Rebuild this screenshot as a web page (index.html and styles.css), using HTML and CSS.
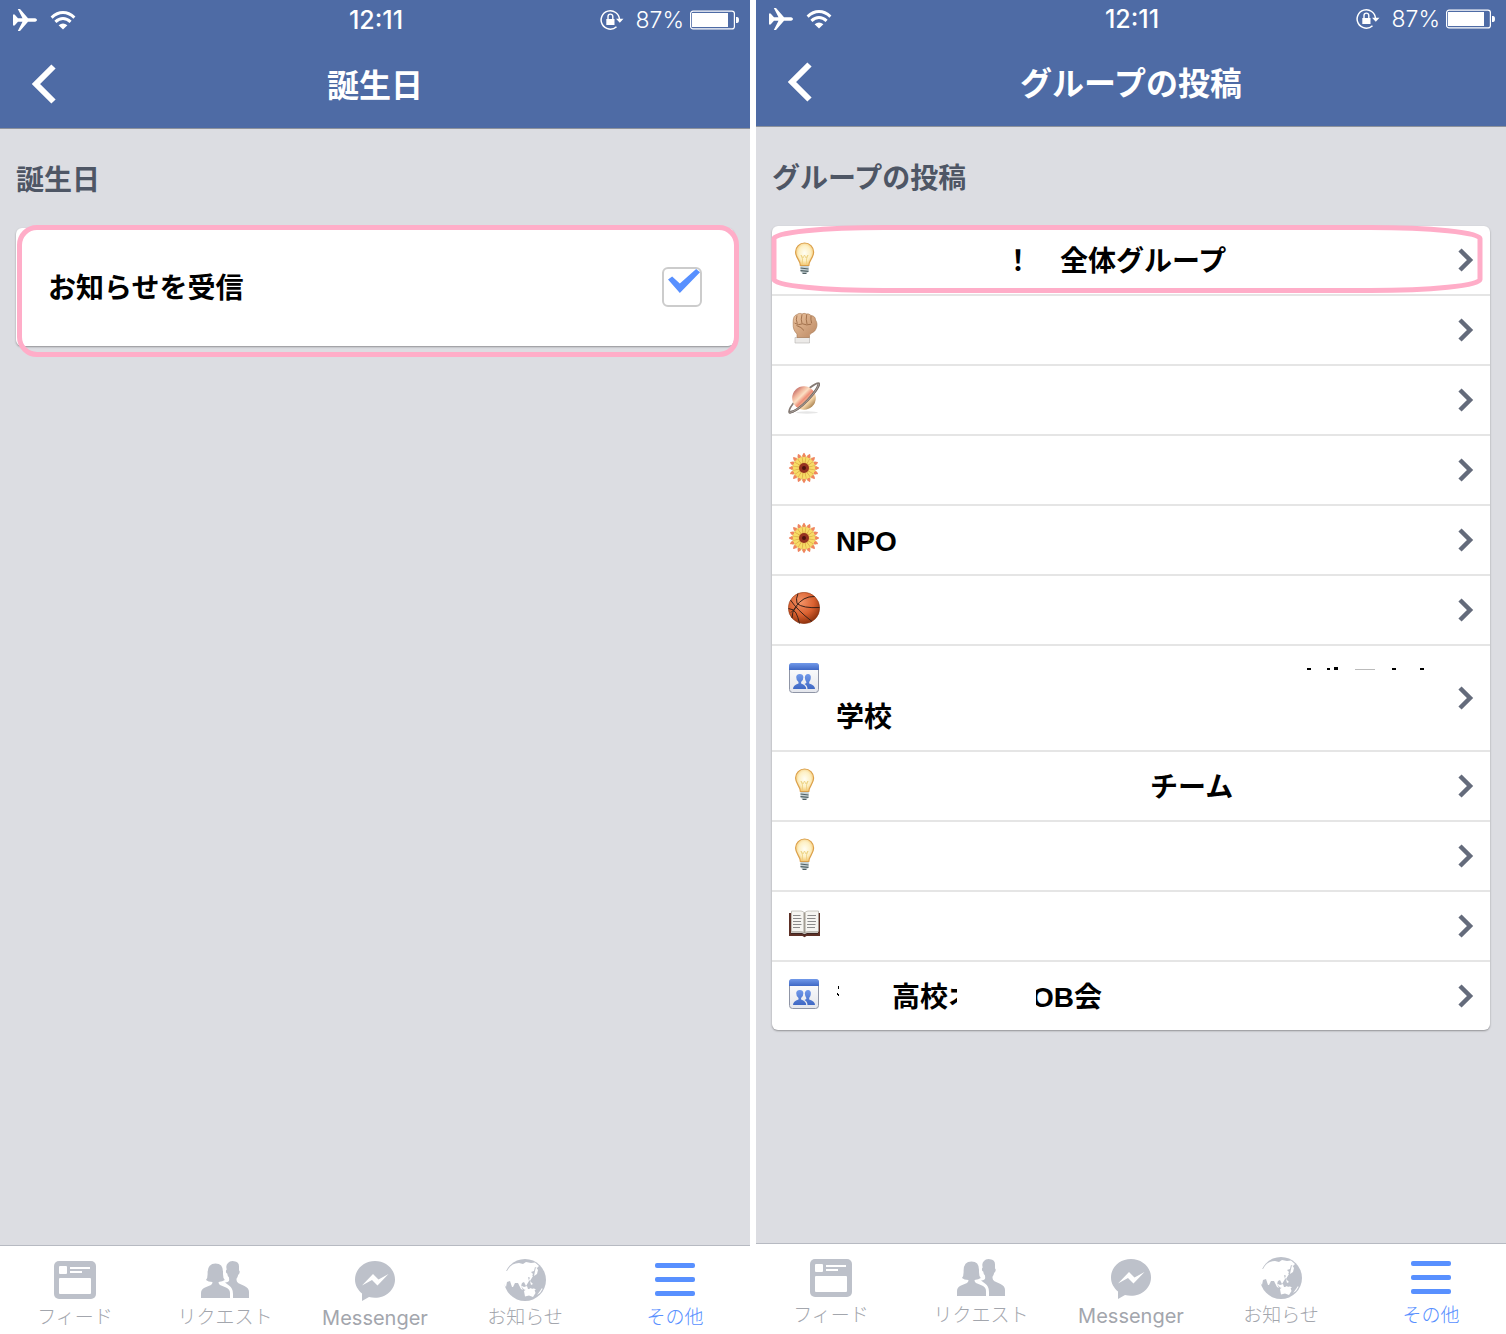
FILE: index.html
```html
<!DOCTYPE html>
<html lang="ja">
<head>
    <meta charset="UTF-8">
    <title>お知らせ設定</title>
    <link rel="stylesheet" href="styles.css">
</head>
<body>
    <!-- shared icons -->
    <svg class="sprite" aria-hidden="true">
        <defs>
            <radialGradient id="g-bulb" cx=".5" cy=".45" r=".55">
                <stop offset="0" stop-color="#fffef4"/>
                <stop offset=".6" stop-color="#fdf0c4"/>
                <stop offset="1" stop-color="#f5c672"/>
            </radialGradient>
            <linearGradient id="g-skin" x1="0" x2="1" y1="0" y2="1">
                <stop offset="0" stop-color="#ecc4a0"/>
                <stop offset="1" stop-color="#bb8862"/>
            </linearGradient>
            <linearGradient id="g-planet" x1="0" x2="1" y1="0" y2="1">
                <stop offset=".1" stop-color="#b9605f"/>
                <stop offset=".28" stop-color="#f0b39a"/>
                <stop offset=".4" stop-color="#fbe0c4"/>
                <stop offset=".52" stop-color="#ee8f78"/>
                <stop offset=".68" stop-color="#f6d6a8"/>
                <stop offset=".9" stop-color="#98703f"/>
            </linearGradient>
            <radialGradient id="g-ball" cx=".4" cy=".3" r=".7">
                <stop offset="0" stop-color="#f49468"/>
                <stop offset=".6" stop-color="#d9602f"/>
                <stop offset="1" stop-color="#92340f"/>
            </radialGradient>
            <linearGradient id="g-bar" x1="0" x2="0" y1="0" y2="1">
                <stop offset="0" stop-color="#7199ea"/>
                <stop offset="1" stop-color="#3f68c4"/>
            </linearGradient>
            <linearGradient id="g-pane" x1="0" x2="0" y1="0" y2="1">
                <stop offset="0" stop-color="#fff"/>
                <stop offset="1" stop-color="#e4e6ec"/>
            </linearGradient>
        </defs>

        <symbol id="plane" viewBox="0 0 26 22">
            <path fill="#fff" d="M1 5.500h1.600L6 9.300h4.500L5.800 0H8l8 9.300h7.200q1.800.4 1.800 1.700t-1.800 1.700H16L8 22H5.800l4.700-9.300H6L2.600 16.500H1L1 11z"/>
        </symbol>
        <symbol id="wifi" viewBox="0 0 26 19">
            <g fill="none" stroke="#fff" stroke-width="3">
                <path d="M1.600 6.600Q7 1.600 13 1.600t11.400 5"/>
                <path d="M5.400 10.800Q9 7.600 13 7.600t7.600 3.200"/>
            </g>
            <path fill="#fff" d="M8.600 14.200Q13 10.600 17.400 14.200L13 18.600z"/>
        </symbol>
        <symbol id="lock" viewBox="0 0 24 22">
            <path fill="none" stroke="#fff" stroke-width="1.500" d="M16.500 17.800A9.200 9.200 0 1 1 19.500 10.500"/>
            <path fill="#fff" d="M16 9.800h7.500l-3.700 4z"/>
            <path fill="#fff" d="M6.300 10h8.200v6H6.300z"/>
            <path fill="none" stroke="#fff" stroke-width="1.400" d="M8 10.500V7.500a2.400 2.400 0 0 1 4.800 0v3"/>
        </symbol>
        <symbol id="battery" viewBox="0 0 50 20">
            <rect x=".6" y="1.100" width="43.800" height="17.800" rx="2.500" fill="none" stroke="#fff" stroke-width="1.200"/>
            <rect x="2" y="3" width="36" height="14" fill="#fff"/>
            <path fill="#fff" d="M46 7h1q2 0 2 3t-2 3h-1z"/>
        </symbol>
        <symbol id="back" viewBox="0 0 26 40">
            <path fill="none" stroke="#fff" stroke-width="6" d="M22.500 2.500 5 20l17.500 17.500"/>
        </symbol>
        <symbol id="chevron" viewBox="0 0 16 24">
            <path fill="none" stroke="#646b7b" stroke-width="4.500" d="M2 2l10 10L2 22"/>
        </symbol>

        <symbol id="bulb" viewBox="0 0 32 32">
            <path fill="url(#g-bulb)" stroke="#dba04a" stroke-width="1.200" d="M12.400 23.500C12.400 18 7.600 16 7.600 10a9 9 0 0 1 18 0c0 6-4.800 8-4.800 13.500z"/>
            <path fill="none" stroke="#ecd07e" stroke-width=".8" d="M14.500 23v-6l-1.500-4 2 3 1.500-3 1.500 3 2-3-1.500 4v6"/>
            <path fill="#c8d3d6" d="M12.400 24h8.400v5q-1.500 3-4.200 3t-4.200-3z"/>
            <path fill="none" stroke="#4f6064" stroke-width="1.200" d="M12.500 26l8 1M12.500 28.700l8 .6M14.500 31.300h4"/>
        </symbol>
        <symbol id="fist" viewBox="0 0 32 32">
            <path fill="#eceae8" stroke="#b5b1ae" stroke-width=".6" d="M7 25.500h14.500V31H7z"/>
            <path fill="url(#g-skin)" stroke="#a5754f" stroke-width=".6" d="M9 25.500v-3.500C6 19 5 16 5.200 12 5 6 6 3.500 9 2.600 10 1.300 13 1 14 2q2-1.300 4.500 0 2.500-.7 4.500 1.500c3 .3 4.500 2 4.500 4.500 2.500 3.500 1.500 8-.8 11-2 2-5.200 2.500-5.200 4.500v2z"/>
            <path fill="none" stroke="#94633f" stroke-width=".8" d="M9 3.500Q7.500 8 9.300 11.500M14 2.500q-1.500 5 0 9M18.700 2.500q-1 5 .3 9.500M23 3.800q-.5 4 .7 7.500M6.500 11q4 3 8 .8 4 2 8.700.4M8.500 13.500q5 1.500 7.500 5"/>
        </symbol>
        <symbol id="planet" viewBox="0 0 32 32">
            <ellipse cx="19" cy="30.500" rx="11" ry="1.200" fill="#e6e6e6"/>
            <path fill="none" stroke="#857a74" stroke-width="1.800" d="M8 18C2 25 .5 29 1.300 30.500c2 2 12-6 19-13S32.500 3 31 1.300C29.500.5 25.500 3 21.500 6"/>
            <circle cx="16" cy="16" r="11.800" fill="url(#g-planet)"/>
            <path fill="none" stroke="#756b66" stroke-width="2.400" d="M1.800 30.300c5-.5 12-6 18-12.300S30 6 30.800 1.800"/>
            <path fill="none" stroke="#c0b8b2" stroke-width=".7" d="M1.800 30.300c5-.5 12-6 18-12.300S30 6 30.800 1.800"/>
        </symbol>
        <symbol id="petals" viewBox="0 0 32 32">
            <path fill="#f7dc66" stroke="#d1973c" stroke-width=".4" d="M16 14L13.800 6.500 14.600 3h2.800L18.200 6.500z"/>
            <path fill="#f08460" d="M14.400 4.500Q14.800 1 16 .8q1.200.2 1.600 3.700L16 5.200z"/>
        </symbol>
        <symbol id="flower" viewBox="0 0 32 32">
            <circle cx="16" cy="16" r="10" fill="#d9a23c"/>
            <use href="#petals"/>
            <use href="#petals" transform="rotate(22.500 16 16)"/>
            <use href="#petals" transform="rotate(45 16 16)"/>
            <use href="#petals" transform="rotate(67.500 16 16)"/>
            <use href="#petals" transform="rotate(90 16 16)"/>
            <use href="#petals" transform="rotate(112.500 16 16)"/>
            <use href="#petals" transform="rotate(135 16 16)"/>
            <use href="#petals" transform="rotate(157.500 16 16)"/>
            <use href="#petals" transform="rotate(180 16 16)"/>
            <use href="#petals" transform="rotate(202.500 16 16)"/>
            <use href="#petals" transform="rotate(225 16 16)"/>
            <use href="#petals" transform="rotate(247.500 16 16)"/>
            <use href="#petals" transform="rotate(270 16 16)"/>
            <use href="#petals" transform="rotate(292.500 16 16)"/>
            <use href="#petals" transform="rotate(315 16 16)"/>
            <use href="#petals" transform="rotate(337.500 16 16)"/>
            <circle cx="16" cy="16" r="5" fill="#963220"/>
            <circle cx="16" cy="16" r="2" fill="#4c130c"/>
        </symbol>
        <symbol id="ball" viewBox="0 0 32 32">
            <circle cx="16" cy="16" r="15.700" fill="url(#g-ball)" stroke="#84310f" stroke-width=".5"/>
            <path fill="none" stroke="#3b2219" stroke-width="1" d="M10 1.500Q7.500 7 9 11.500 15 16.500 31.500 15.500M26.500 4.500Q15 4 7.500 15 4 20 4 26M2.500 8Q9 18 24 29.500M.5 16.500Q6 17 8 21t3.500 10.500M3 20.500l6-6"/>
        </symbol>
        <symbol id="group" viewBox="0 0 32 32">
            <rect x="1.500" y="1.500" width="29" height="29" rx="3" fill="url(#g-pane)" stroke="#8f95a6"/>
            <path fill="url(#g-bar)" d="M1 8V4q0-3 3-3h24q3 0 3 3v4z"/>
            <path fill="url(#g-bar)" d="M5 27q0-4 5.500-5.500v-1.500Q8 17.500 8.200 15q.3-3 3.600-3t3.600 3q.2 2.500-2.300 5v1.500Q18.200 23 18.200 27zM19.500 27q0-3.500-3-5l1.800-1V20q-1.300-2-1.500-4.500.3-3.500 3.200-3.500 3.200.3 2.800 4 0 2-1.600 4v1.500Q27 23 27 27z"/>
        </symbol>
        <symbol id="book" viewBox="0 0 32 32">
            <path fill="#5d3026" d="M1 5h31v23H18.500l-2 1.300-2-1.300H1z"/>
            <path fill="#c9c6c0" d="M3 4l12 .8 1.500 1.300L18 4.800 30 4v22H3z"/>
            <path fill="#f6f5f1" stroke="#a8a49c" stroke-width=".6" d="M3.500 3h9.500q3 .5 3.500 2 .5-1.500 3.500-2h10.500v20.500h-10q-3 0-4 1.500-1-1.500-4-1.500h-9z"/>
            <path fill="#a39d92" d="M15.500 4.500h2V25h-2z"/>
            <path fill="none" stroke="#8b8b8b" d="M5 7.500h7.500M5 10.500h8.500M5 13.500h8M5 16.500h8.500M5 19.500h7M19.500 7.500H28M19 10.500h8.500M19.500 13.500H28M19 16.500h8.500M19 19.500h8"/>
            <path fill="none" stroke="#3d2420" d="M3 25.500h11.500l2 1.500 2-1.500H30"/>
        </symbol>

        <symbol id="feed" viewBox="0 0 44 44">
            <rect x="1" y="3" width="42" height="38" rx="5" fill="currentColor"/>
            <g fill="#fff">
                <rect x="6" y="8" width="8" height="8" rx="1"/>
                <rect x="17" y="9" width="20" height="2"/>
                <rect x="17" y="13" width="12" height="2"/>
                <rect x="6" y="20" width="32" height="16" rx="1"/>
            </g>
        </symbol>
        <symbol id="friends" viewBox="0 0 48 44">
            <path fill="currentColor" d="M0 40v-5q0-4 4-5.500l6-2.500q1.500-1 1.500-3Q7 24 5 22q1.800-2 1.600-7Q6.500 5.500 14.500 5.500T22 15q-.2 5 1.800 7-2 1.500-6.300 2 0 2 1.500 3l6 2.500q4 1.500 4 5.500v5z"/>
            <path fill="currentColor" d="M32 40v-4q0-6-4-8.500L24 24.500q4-.5 4.200-2.500l-.2-2.500q-1.500-1.200-1.800-4-1.500-.5-1.200-2.500 0-1.300.7-1.500Q24.500 7 27 5q2-2.400 6-1.800Q38.300 3.500 38 9v3.500q1 .3.600 2-.3 2-1.400 2.200-.5 2.500-1.700 4V22q0 2 2 3.200l6 2.800q4.500 2 4.500 6v6z"/>
        </symbol>
        <symbol id="messenger" viewBox="0 0 44 44">
            <path fill="currentColor" d="M22 3C11 3 2 11 2 21.500c0 6 3 10.500 7 14V43l7-4q3 .8 6 .8c11 0 20-8 20-18.300S33 3 22 3z"/>
            <path fill="#fff" d="M9 27.500L20 16l5.500 5.500L35.500 16 24.500 27.500 19 22z"/>
        </symbol>
        <symbol id="globe" viewBox="0 0 44 44">
            <circle cx="22" cy="22" r="21" fill="currentColor"/>
            <path fill="#fff" d="M4 13Q8 5 16 5l4 1 3-2 5 1 4-.5 4 3.500-2 2-2-1-1 4-3 1 2 2-2 4-3-1 1 4-3 5-2-4-2 1-1 3 2 4-2-1-3-6-3 0-2 4-1 0-2-6-3 1-1 5q-3-3-3-7 0-4 2-9z"/>
            <path fill="#fff" d="M33 9l2 3-1 4-3 2 1-5zM28 17l2 1-3 5-1-1zM17 27l4 2 3-1 1 3 6-.5 2 1-4 2-8-2zM27 23l3 3-2 1zM21 33q2-2 5-2l2-1 1.500 2 1.500-2 1.500 5-2.500 4-4-1.500-4 1zM37 33l2-3 .5 1-2.500 4-3 2z"/>
        </symbol>
        <symbol id="menu" viewBox="0 0 44 44">
            <g fill="currentColor">
                <rect x="2" y="5" width="40" height="5" rx="2"/>
                <rect x="2" y="19" width="40" height="5" rx="2"/>
                <rect x="2" y="33" width="40" height="5" rx="2"/>
            </g>
        </symbol>
    </svg>

    <section class="phone">
        <header class="header">
            <div class="status">
                <div class="status-left">
                    <svg width="26" height="22"><use href="#plane"/></svg>
                    <svg width="26" height="19"><use href="#wifi"/></svg>
                </div>
                <div class="clock">12:11</div>
                <div class="status-right">
                    <svg width="24" height="22"><use href="#lock"/></svg>
                    <span class="percent">87%</span>
                    <svg width="50" height="20"><use href="#battery"/></svg>
                </div>
            </div>
            <div class="nav">
                <button class="back" type="button" aria-label="戻る"><svg width="26" height="40"><use href="#back"/></svg></button>
                <h1>誕生日</h1>
            </div>
        </header>

        <main class="content">
            <h2>誕生日</h2>
            <div class="card">
                <div class="setting">
                    <label for="receive">お知らせを受信</label>
                    <input id="receive" type="checkbox" checked>
                </div>
                <div class="marker-card"></div>
            </div>
        </main>

        <nav class="tabs">
            <a href="#"><svg width="44" height="44"><use href="#feed"/></svg>フィード</a>
            <a href="#"><svg width="48" height="44"><use href="#friends"/></svg>リクエスト</a>
            <a href="#"><svg width="44" height="44"><use href="#messenger"/></svg><span class="latin">Messenger</span></a>
            <a href="#"><svg width="44" height="44"><use href="#globe"/></svg>お知らせ</a>
            <a href="#" class="active"><svg width="44" height="44"><use href="#menu"/></svg>その他</a>
        </nav>
    </section>

    <section class="phone phone-groups">
        <header class="header">
            <div class="status">
                <div class="status-left">
                    <svg width="26" height="22"><use href="#plane"/></svg>
                    <svg width="26" height="19"><use href="#wifi"/></svg>
                </div>
                <div class="clock">12:11</div>
                <div class="status-right">
                    <svg width="24" height="22"><use href="#lock"/></svg>
                    <span class="percent">87%</span>
                    <svg width="50" height="20"><use href="#battery"/></svg>
                </div>
            </div>
            <div class="nav">
                <button class="back" type="button" aria-label="戻る"><svg width="26" height="40"><use href="#back"/></svg></button>
                <h1>グループの投稿</h1>
            </div>
        </header>

        <main class="content">
            <h2>グループの投稿</h2>
            <div class="card">
                <a class="row" href="#">
                    <svg class="icon"><use href="#bulb"/></svg>
                    <span class="name"><span class="blank blank-m"></span>！　全体グループ</span>
                    <svg class="arrow"><use href="#chevron"/></svg>
                </a>
                <a class="row" href="#">
                    <svg class="icon"><use href="#fist"/></svg>
                    <span class="name"></span>
                    <svg class="arrow"><use href="#chevron"/></svg>
                </a>
                <a class="row" href="#">
                    <svg class="icon"><use href="#planet"/></svg>
                    <span class="name"></span>
                    <svg class="arrow"><use href="#chevron"/></svg>
                </a>
                <a class="row" href="#">
                    <svg class="icon"><use href="#flower"/></svg>
                    <span class="name"></span>
                    <svg class="arrow"><use href="#chevron"/></svg>
                </a>
                <a class="row" href="#">
                    <svg class="icon"><use href="#flower"/></svg>
                    <span class="name">NPO</span>
                    <svg class="arrow"><use href="#chevron"/></svg>
                </a>
                <a class="row" href="#">
                    <svg class="icon"><use href="#ball"/></svg>
                    <span class="name"></span>
                    <svg class="arrow"><use href="#chevron"/></svg>
                </a>
                <a class="row" href="#">
                    <svg class="icon"><use href="#group"/></svg>
                    <span class="name">
                        <!-- only the tops of the erased letters are left -->
                        <svg class="scraps" viewBox="0 0 124 36" aria-hidden="true">
                            <path d="M3 4h4v2H3zM23 4h3v2h-3zM30 3h4v3h-4zM88 4h4v2h-4zM116 4h4v2h-4z"/>
                            <path fill="#bbb" d="M51 5h20v1H51z"/>
                        </svg>
                        <span class="second-line">学校</span>
                    </span>
                    <svg class="arrow"><use href="#chevron"/></svg>
                </a>
                <a class="row" href="#">
                    <svg class="icon"><use href="#bulb"/></svg>
                    <span class="name"><span class="blank blank-l"></span>チーム</span>
                    <svg class="arrow"><use href="#chevron"/></svg>
                </a>
                <a class="row" href="#">
                    <svg class="icon"><use href="#bulb"/></svg>
                    <span class="name"></span>
                    <svg class="arrow"><use href="#chevron"/></svg>
                </a>
                <a class="row" href="#">
                    <svg class="icon"><use href="#book"/></svg>
                    <span class="name"></span>
                    <svg class="arrow"><use href="#chevron"/></svg>
                </a>
                <a class="row" href="#">
                    <svg class="icon"><use href="#group"/></svg>
                    <span class="name"><svg class="specks" viewBox="0 0 56 36" aria-hidden="true"><path d="M2 6h1v3H2zM1 13h1v2H1zM2 14h1v2H2z"/></svg>高校オ<span class="blank eraser"></span>OB会</span>
                    <svg class="arrow"><use href="#chevron"/></svg>
                </a>
                <svg class="marker-row" aria-hidden="true"><rect x="3" y="2.500" rx="110" ry="11"/></svg>
            </div>
        </main>

        <nav class="tabs">
            <a href="#"><svg width="44" height="44"><use href="#feed"/></svg>フィード</a>
            <a href="#"><svg width="48" height="44"><use href="#friends"/></svg>リクエスト</a>
            <a href="#"><svg width="44" height="44"><use href="#messenger"/></svg><span class="latin">Messenger</span></a>
            <a href="#"><svg width="44" height="44"><use href="#globe"/></svg>お知らせ</a>
            <a href="#" class="active"><svg width="44" height="44"><use href="#menu"/></svg>その他</a>
        </nav>
    </section>
</body>
</html>
```

FILE: styles.css
```css
* {
    box-sizing: border-box;
}
body {
    margin: 0;
    display: flex;
    gap: 6px;
    min-height: 100vh;
    background: #fff;
    color: #000;
    font-family: "Liberation Sans", "Noto Sans CJK JP", sans-serif;
}
a {
    color: inherit;
    text-decoration: none;
}
svg {
    display: block;
    flex-shrink: 0;
}
.sprite {
    position: absolute;
    width: 0;
    height: 0;
}
.phone {
    flex: 1;
    min-width: 0;
    display: flex;
    flex-direction: column;
    background: #dcdde2;
}

/* header */
.header {
    background: #4e6ba5;
    border-bottom: 1px solid #8d929c;
    color: #fff;
}
.status {
    display: grid;
    grid-template-columns: 1fr auto 1fr;
    align-items: center;
    height: 40px;
    padding: 0 10px 0 12px;
    font-family: Inter, sans-serif;
    font-size: 23px;
}
.phone-groups .status {
    height: 38px;
}
.status-left {
    display: flex;
    align-items: center;
    gap: 12px;
}
.clock {
    font-size: 25px;
    font-weight: 500;
}
.status-right {
    display: flex;
    align-items: center;
    justify-content: flex-end;
}
.percent {
    margin: 0 6px 0 12px;
    font-weight: 300;
}
.nav {
    display: grid;
    grid-template-columns: 88px 1fr 88px;
    align-items: center;
    height: 88px;
}
.back {
    display: flex;
    padding: 0 0 0 31px;
    border: none;
    background: none;
    cursor: pointer;
}
h1 {
    margin: 0;
    padding-top: 4px;
    font-size: 32px;
    line-height: 40px;
    text-align: center;
}

/* content */
.content {
    flex: 1;
    padding: 34px 16px;
}
h2 {
    margin: 0 0 29px;
    color: #4e5665;
    font-size: 28px;
    line-height: 36px;
}
.card {
    position: relative;
    background: #fff;
    border-radius: 6px;
    box-shadow: 0 1px 2px rgba(0, 0, 0, 0.35);
    font-size: 28px;
    font-weight: bold;
    line-height: 36px;
}
.setting {
    display: flex;
    align-items: center;
    justify-content: space-between;
    padding: 39px 32px;
}
.setting label {
    padding-top: 4px;
}
.setting input {
    appearance: none;
    width: 40px;
    height: 40px;
    margin: 0;
    border: 2px solid #ccc;
    border-radius: 6px;
    background: #fff;
}
.setting input:checked::before {
    content: "";
    display: block;
    width: 32px;
    height: 24px;
    margin-left: 4px;
    background: #5890ff;
    clip-path: polygon(0 44%, 13% 31%, 37% 60%, 88% 0, 100% 14%, 37% 100%);
}

/* group list */
.row {
    display: flex;
    align-items: center;
    padding: 14px 16px;
    border-bottom: 2px solid #e5e5e5;
}
.row:nth-last-child(2) {
    border-bottom: none;
}
.icon {
    align-self: flex-start;
    width: 32px;
    height: 32px;
    margin: 2px 16px 0 0;
}
.name {
    flex: 1;
    min-width: 0;
    min-height: 40px;
    padding-top: 4px;
}
.arrow {
    width: 16px;
    height: 24px;
}
.blank {
    display: inline-block;
}
.blank-m {
    width: 168px;
}
.blank-l {
    width: 314px;
}
.eraser {
    position: relative;
    width: 79px;
    height: 36px;
    margin: 0 -4px 0 -19px;
    background: #fff;
    vertical-align: top;
}
.scraps {
    width: 124px;
    height: 36px;
    margin: 0 30px 0 auto;
}
.second-line {
    display: block;
}
.specks {
    display: inline-block;
    width: 56px;
    height: 36px;
    vertical-align: top;
}

/* pink pen marks */
.marker-card,
.marker-row {
    position: absolute;
    pointer-events: none;
}
.marker-card {
    top: -3px;
    right: -5px;
    bottom: -11px;
    left: 1px;
    border: 5px solid #ffadc8;
    border-radius: 20px;
}
.marker-row {
    top: -1px;
    left: -1px;
    width: calc(100% - 6px);
    height: 68px;
}
.marker-row rect {
    width: calc(100% - 6px);
    height: calc(100% - 5px);
    fill: none;
    stroke: #ffadc8;
    stroke-width: 5px;
}

/* bottom tabs */
.tabs {
    display: flex;
    padding: 12px 0 2px;
    border-top: 1px solid #b7bac2;
    background: #fff;
}
.phone-groups .tabs {
    padding-bottom: 4px;
}
.tabs a {
    flex: 1;
    display: flex;
    flex-direction: column;
    align-items: center;
    gap: 2px;
    color: #a3a6ad;
    font-size: 19px;
    font-weight: 300;
    line-height: 28px;
}
.tabs svg {
    color: #bdc1ca;
}
.latin {
    font-family: Inter, sans-serif;
    font-size: 20px;
    font-weight: 400;
}
.tabs .active,
.tabs .active svg {
    color: #5890ff;
}
```
